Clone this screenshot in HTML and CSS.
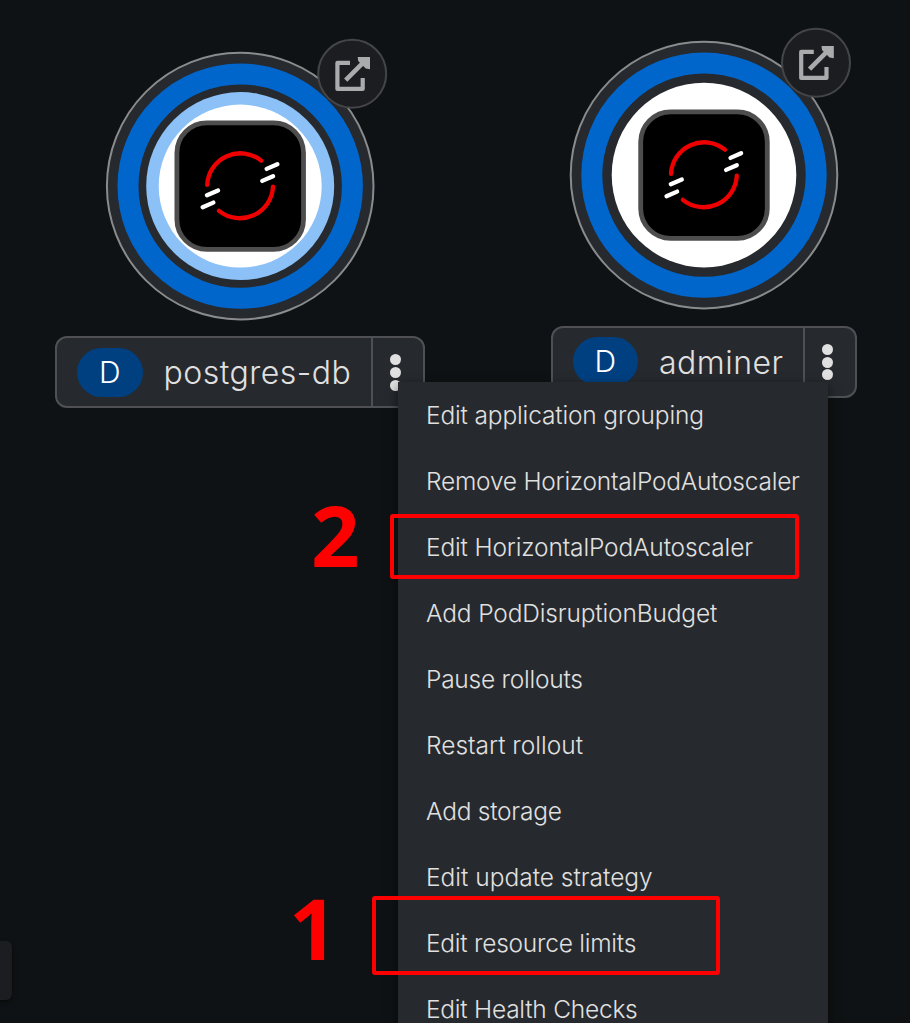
FILE: index.html
```
<!DOCTYPE html>
<html lang="en"><head><meta charset="utf-8"><title>Topology</title><link rel="stylesheet" href="styles.css"></head>
<body>
<main class="topology">
<svg class="graph" width="910" height="330" viewBox="0 0 910 330">
  <defs>
    <g id="decorator">
      <circle cx="112" cy="-112.3" r="34" fill="#1b1d21" stroke="#444548" stroke-width="2"/>
      <path d="M109.8-123.2H97.2V-97.2H122.5V-108" fill="none" stroke="#aaabac" stroke-width="4.2" stroke-linejoin="round"/>
      <path d="M105.500-106L124-124.500" stroke="#aaabac" stroke-width="4.600"/>
      <path d="M117.500-129.200H129.800V-116.800L125.500-117.500L118-125Z" fill="#aaabac"/>
    </g>
    <g id="tile">
      <rect x="-63.300" y="-63.300" width="126.600" height="126.600" rx="30" fill="#000" stroke="#4d4d4d" stroke-width="4.800"/>
      <g fill="none" stroke-width="4.300" stroke-linecap="round">
        <path stroke="#e00" d="M-33-1.200A33.200 33.200 0 0 1 21-25.500M32.800.5A33.200 33.200 0 0 1-21.200 24.800"/>
        <path stroke="#fff" d="M26.500-17.200L37.100-21.900M22.100-5.200L32.800-9.900M-33.200 9.100L-22.200 4.500M-37.500 21.100L-26.900 16.500"/>
      </g>
    </g>
    <g id="rings">
      <circle r="133.300" fill="#26292d" stroke="#8a8b8d" stroke-width="2"/>
      <circle r="112.200" fill="none" stroke="#06c" stroke-width="21"/>
    </g>
  </defs>
  <g transform="translate(240.200 186.100)"><use href="#rings"/><circle r="94" fill="#8bc1f7"/><circle r="81.500" fill="#fff"/><use href="#tile"/><use href="#decorator"/></g>
  <g transform="translate(704 175.100)"><use href="#rings"/><circle r="92.300" fill="#fff"/><use href="#tile"/><use href="#decorator"/></g>
</svg>
<div class="label postgres"><span class="kind">D</span><span class="name">postgres-db</span><span class="kebab"><i></i><i></i><i></i></span></div>
<div class="label adminer"><span class="kind">D</span><span class="name">adminer</span><span class="kebab"><i></i><i></i><i></i></span></div>
<div class="drawer"></div>
<ul class="menu">
<li class="snug">Edit application grouping</li>
<li class="tight">Remove HorizontalPodAutoscaler</li>
<li class="snug">Edit HorizontalPodAutoscaler</li>
<li class="snug">Add PodDisruptionBudget</li>
<li class="tight">Pause rollouts</li>
<li>Restart rollout</li>
<li class="tight">Add storage</li>
<li>Edit update strategy</li>
<li class="tight">Edit resource limits</li>
<li class="tight">Edit Health Checks</li>
</ul>
<div class="mark mark-two"></div><div class="mark mark-one"></div>
<span class="step step-two">2</span><span class="step step-one">1</span>
</main>
</body></html>
```
FILE: styles.css
```
body { margin: 0; background: #0f1214; }
.topology { position: relative; width: 910px; height: 1023px; overflow: hidden; font-family: Inter, "Noto Sans", sans-serif; font-weight: 300; color: #e0e0e0; }
.graph { display: block; }
.label { position: absolute; box-sizing: border-box; display: flex; align-items: center; height: 72px; border: 2.5px solid #4f5053; border-radius: 12px; background: #26292d; padding-left: 20px; }
.postgres { left: 55px; top: 336px; width: 370px; }
.adminer { left: 550.500px; top: 325.500px; width: 306.500px; }
.kind { width: 65.500px; height: 49px; border-radius: 25px; background: #004080; color: #fff; text-align: center; font-size: 30px; font-weight: 350; line-height: 48px; }
.name { margin-left: 21px; font-size: 32px; letter-spacing: .5px; line-height: 66px; padding-top: 2px; flex: 1; white-space: nowrap; }
.kebab { box-sizing: border-box; width: 52px; height: 100%; border-left: 2px solid #4f5053; display: flex; flex-direction: column; align-items: center; justify-content: center; gap: 1.700px; padding: 1px 6px 0 0; }
.kebab i { width: 11px; height: 11px; border-radius: 50%; background: #e0e0e0; }
.drawer { position: absolute; left: -10px; top: 941px; width: 22px; height: 59px; border-radius: 6px; background: #1b1d21; box-shadow: 0 2px 4px #0008; }
.menu { position: absolute; left: 398px; top: 382px; width: 430px; height: 660px; margin: 0; padding: 0; list-style: none; background: #26292d; box-shadow: 0 4px 10px #0008; }
.menu li { height: 66px; line-height: 66px; padding-left: 28px; font-size: 24.500px; white-space: nowrap; }
.menu .snug { letter-spacing: -.15px; }
.menu .tight { letter-spacing: -.24px; }
.mark { position: absolute; box-sizing: border-box; border: 4.500px solid #f00; border-radius: 3px; }
.mark-two { left: 390px; top: 514px; width: 409px; height: 65px; }
.mark-one { left: 372px; top: 896px; width: 348px; height: 79px; }
.step { position: absolute; font: 700 85px/100px "Open Sans", sans-serif; color: #f00; }
.step-two { left: 311px; top: 484px; }
.step-one { left: 289px; top: 877px; }
```
